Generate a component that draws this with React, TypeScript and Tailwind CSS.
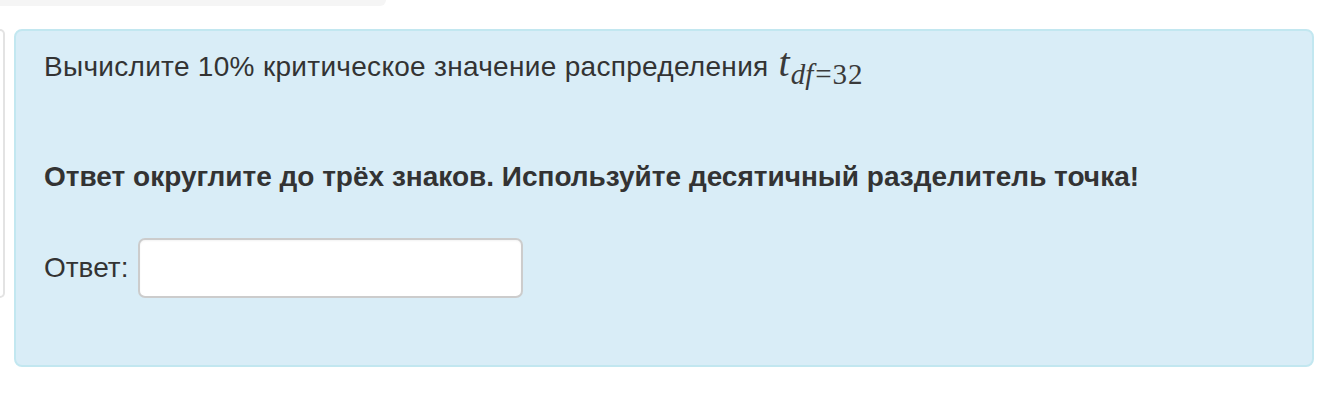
export default function App() {
  return (
    <div
      className="w-[1334px] h-[410px] bg-white overflow-hidden text-[#333]"
      style={{ fontFamily: '"Liberation Sans", Arial, sans-serif' }}
    >
      <div className="w-[386px] h-[6px] bg-[#f5f5f5] rounded-br-[9px]" />
      <div className="flex items-start mt-[23px]">
        <div className="w-[5px] h-[269px] border-2 border-l-0 border-[#e3e3e3] rounded-r-[5px] bg-white" />
        <div className="ml-[9px] w-[1300px] h-[338px] bg-[#d9edf7] border-2 border-[#c2e7f0] rounded-[8px] px-[28px] pt-[12px]">
          <p className="text-[28px] leading-[40px] flex items-baseline">
            <span className="tracking-[0.3px]">Вычислите 10% критическое значение распределения</span>
            <span
              className="ml-[10px] italic text-[40px] leading-none text-[#3a3a3a]"
              style={{ fontFamily: '"Liberation Serif", "Times New Roman", serif' }}
            >
              t
              <span className="text-[29px] relative top-[8px] ml-[1px]">
                df<span className="not-italic ml-[2px] tracking-[1px]">=32</span>
              </span>
            </span>
          </p>
          <p className="mt-[70px] text-[28px] leading-[40px] font-bold">
            Ответ округлите до трёх знаков. Используйте десятичный разделитель точка!
          </p>
          <div className="mt-[41px] flex items-center gap-[10px]">
            <label className="text-[28px] leading-[40px]">Ответ:</label>
            <input
              type="text"
              className="w-[385px] h-[60px] bg-white border-2 border-[#cccccc] rounded-[7px] px-3 text-[28px] outline-none shadow-[inset_0_1px_2px_rgba(0,0,0,0.05)]"
            />
          </div>
        </div>
      </div>
    </div>
  );
}
